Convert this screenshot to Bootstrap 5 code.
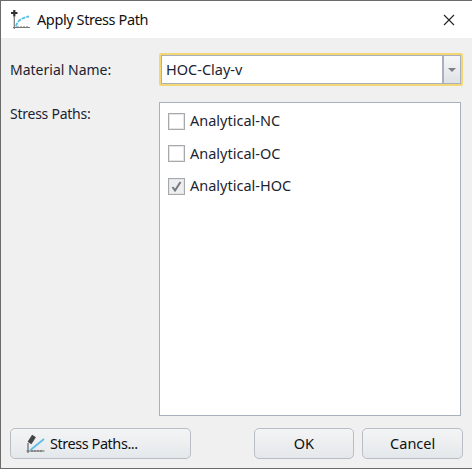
<!DOCTYPE html>
<html lang="en">
<head>
<meta charset="utf-8">
<title>Apply Stress Path</title>
<link rel="stylesheet" href="https://cdn.jsdelivr.net/npm/bootstrap@5.3.0/dist/css/bootstrap.min.css">
<style>
html,body{width:472px;height:469px;overflow:hidden;background:#f0f0f0}
body{font-family:"Noto Sans","Open Sans",sans-serif;font-size:14px;color:#1b2430}
.dlg{width:472px;height:469px;border:1px solid #6b6b6b;border-width:1px 0 1px 1px;background:#f0f0f0;display:flex;flex-direction:column}
.tbar{height:37px;background:#fff;padding-left:9px;flex:none}
.tbar-text{font-size:14.5px;letter-spacing:-.4px;margin-left:3px;color:#111}
.xbtn{width:46px;height:37px;margin-left:auto}
.dbody{flex:1;min-height:0;padding:15px 9px 9px 9px}
.lbl{width:149px;flex:none;font-size:14px}
.lbl-sp{letter-spacing:-.25px;padding-top:1px}
.combo{width:304px;height:33px;border:2px solid #f3d774;border-radius:2px;background:#fff;box-shadow:inset 0 0 0 1px #a9b0bd}
.combo-text{padding-left:5px;flex:1;font-size:14.5px}
.combo-arrow{width:19px;align-self:stretch;border:1px solid #a9b0bd;border-left-width:2px;background:linear-gradient(#f5f6f7,#dfe2e6)}
.tri{width:0;height:0;border-left:4px solid transparent;border-right:4px solid transparent;border-top:4px solid #7d8088}
.paths{margin-top:16px;flex:1;min-height:0}
.plist{width:302px;background:#fff;border:1px solid #a9b0bd;padding:2px 8px}
.pitem{height:32.5px;font-size:14.5px;gap:5px}
.cb{width:17px;height:17px;border:1px solid #a6a8ac;background:#fff;box-shadow:inset 0 0 0 1px #e4e5e7;flex:none}
.cb.on{background:#eceef0}
.foot{margin-top:12px;height:31px;gap:8px;flex:none}
.wbtn{height:31px;border:1px solid #b9bec6;border-radius:5px;background:linear-gradient(#f3f4f5,#e5e8eb);font-size:14.5px;color:#111;padding:0}
.w-sp{width:181px;margin-right:55px;justify-content:flex-start;padding-left:13px;gap:2px;letter-spacing:-.45px}
.w-std{width:101px}
</style>
</head>
<body>
<div class="dlg">
  <div class="tbar d-flex align-items-center">
    <svg width="24" height="24" viewBox="0 0 24 24">
      <path d="M1 5h6.500M4.300 2v6.500" stroke="#333" stroke-width="2.200" fill="none"/>
      <path d="M4.300 8v13M3 19.500h17" stroke="#777" stroke-width="1.200" fill="none"/>
      <path d="M6 18.500C7 14 10 10 19 8.500" stroke="#5bbfe8" stroke-width="1.800" fill="none" stroke-dasharray="4 1"/>
      <path d="M8 18v2M11 18v2M14 18v2M17 18v2" stroke="#777" stroke-width="1"/>
    </svg>
    <span class="tbar-text">Apply Stress Path</span>
    <div class="xbtn d-flex align-items-center justify-content-center">
      <svg width="12" height="12" viewBox="0 0 12 12"><path d="M1 1l10 10M11 1L1 11" stroke="#222" stroke-width="1.100"/></svg>
    </div>
  </div>
  <div class="dbody d-flex flex-column">
    <div class="d-flex align-items-center">
      <div class="lbl">Material Name:</div>
      <div class="combo d-flex align-items-center">
        <div class="combo-text">HOC-Clay-v</div>
        <div class="combo-arrow d-flex align-items-center justify-content-center"><div class="tri"></div></div>
      </div>
    </div>
    <div class="paths d-flex">
      <div class="lbl lbl-sp">Stress Paths:</div>
      <div class="plist">
        <div class="pitem d-flex align-items-center"><span class="cb"></span>Analytical-NC</div>
        <div class="pitem d-flex align-items-center"><span class="cb"></span>Analytical-OC</div>
        <div class="pitem d-flex align-items-center"><span class="cb on d-flex align-items-center justify-content-center"><svg width="11" height="11" viewBox="0 0 11 11"><path d="M1.500 6l2.500 3.500L9.500 1" stroke="#76787d" stroke-width="2" fill="none"/></svg></span>Analytical-HOC</div>
      </div>
    </div>
    <div class="foot d-flex">
      <button class="wbtn w-sp d-flex align-items-center" type="button">
        <svg width="24" height="24" viewBox="0 0 24 24">
          <path d="M10 4L5.500 11" stroke="#444" stroke-width="4.500" fill="none"/>
          <path d="M4 11v10M2.500 19h18" stroke="#666" stroke-width="1.200" fill="none"/>
          <path d="M6.500 18L20 7" stroke="#5bbfe8" stroke-width="1.800" fill="none"/>
          <path d="M8 18v2M11 18v2M14 18v2M17 18v2" stroke="#666" stroke-width="1"/>
        </svg>
        Stress Paths...
      </button>
      <button class="wbtn w-std" type="button">OK</button>
      <button class="wbtn w-std" type="button">Cancel</button>
    </div>
  </div>
</div>
<script src="https://cdn.jsdelivr.net/npm/bootstrap@5.3.0/dist/js/bootstrap.bundle.min.js"></script>
</body>
</html>
